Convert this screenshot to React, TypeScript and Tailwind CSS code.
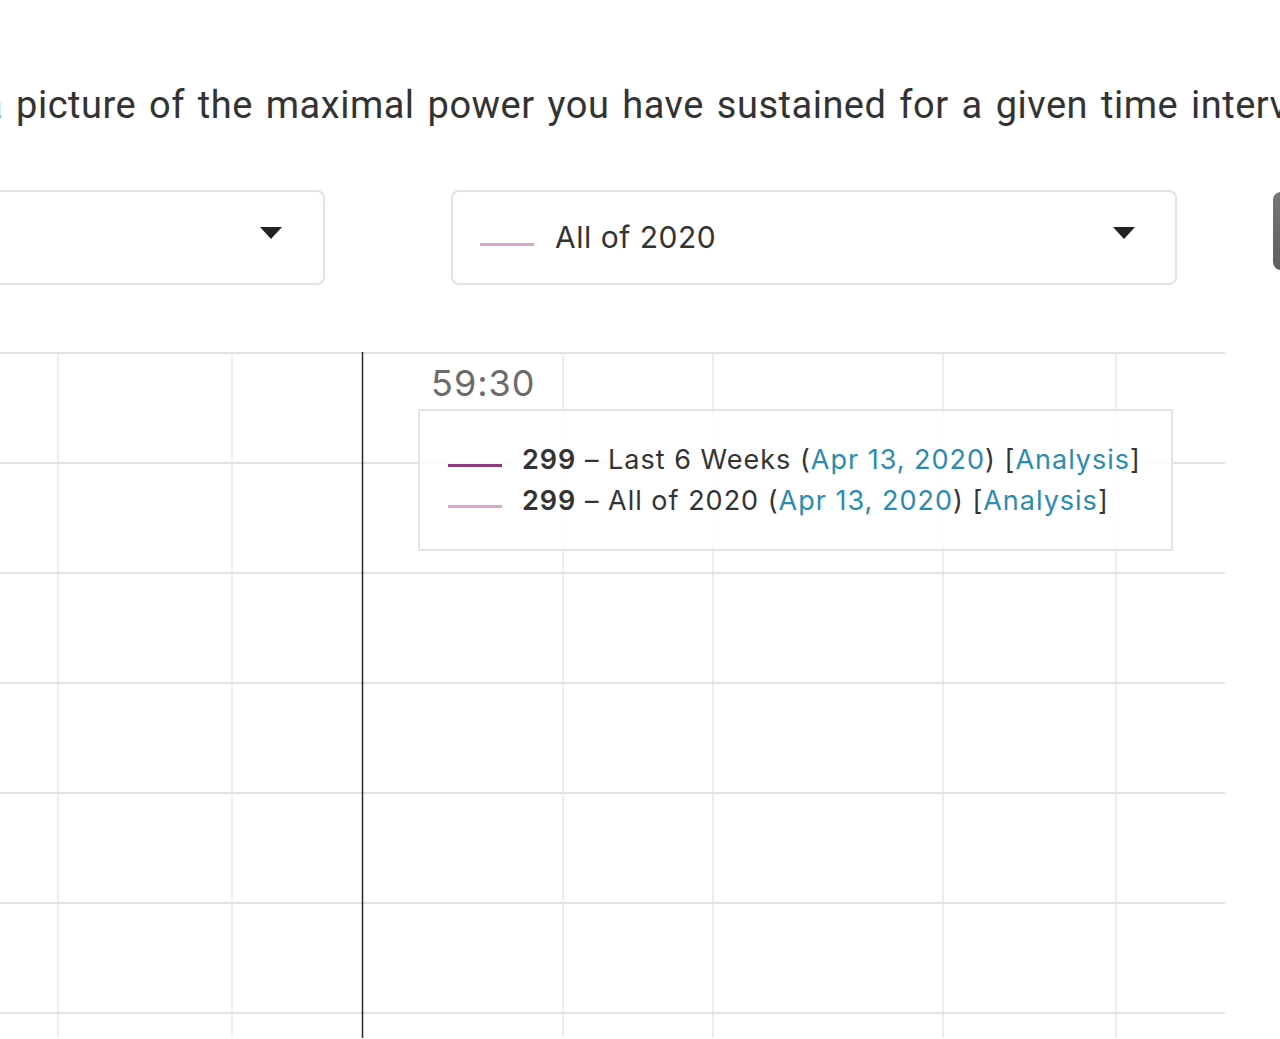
const hLines = [1, 111, 221, 331, 441, 551, 661];
const vLines = [58, 232, 563, 713, 943, 1116];

const Caret = () => (
  <svg width="22" height="12" viewBox="0 0 22 12" className="mb-[10px]">
    <path d="M0 0 L22 0 L11 12 Z" fill="#222" />
  </svg>
);

const TooltipRow = ({ color, label }: { color: string; label: string }) => (
  <div className="flex items-center h-[41px] whitespace-nowrap">
    <span className="w-[54px] h-[3px] mr-[20px] mt-[10px] shrink-0" style={{ backgroundColor: color }} />
    <span className="font-semibold">299</span>
    <span>&nbsp;– {label} (</span>
    <span className="text-[#2b8bb0]">Apr 13, 2020</span>
    <span>) [</span>
    <span className="text-[#2b8bb0]">Analysis</span>
    <span>]</span>
  </div>
);

const PowerChart = () => (
  <div className="relative w-[1280px] h-[686px]">
    <svg width="1225" height="686" className="block">
      {vLines.map((x) => (
        <line key={x} x1={x} y1={0} x2={x} y2={686} stroke="#eeeeee" strokeWidth="2" />
      ))}
      {hLines.map((y) => (
        <line key={y} x1={0} y1={y} x2={1225} y2={y} stroke="#e2e2e2" strokeWidth="2" />
      ))}
      <line x1={362.5} y1={0} x2={362.5} y2={686} stroke="#2a2a2a" strokeWidth="1.5" />
    </svg>

    <div className="absolute left-[431px] top-[13px] text-[36px] leading-none tracking-[1px] text-[#6b6b6b] font-['Inter',sans-serif]">
      59:30
    </div>

    <div className="absolute left-[418px] top-[57px] w-[755px] h-[142px] border-2 border-[#e4e4e4] bg-white/90 pl-[28px] pt-[29px] font-['Inter',sans-serif] text-[27px] tracking-[1px] text-[#333]">
      <TooltipRow color="#8d3a82" label="Last 6 Weeks" />
      <TooltipRow color="#d6a8d0" label="All of 2020" />
    </div>
  </div>
);

export default function App() {
  return (
    <div className="w-[1280px] h-[1039px] overflow-hidden bg-white flex flex-col">
      <p className="mt-[82px] -ml-[18px] whitespace-nowrap text-[38px] leading-[46px] tracking-[0.5px] [word-spacing:3px] text-[#333] font-['Roboto',sans-serif]">
        a picture of the maximal power you have sustained for a given time interval.
      </p>

      <div className="mt-[62px] flex items-start h-[95px]">
        <div className="-ml-[75px] w-[400px] h-[95px] shrink-0 rounded-lg border-2 border-[#e2e2e4] bg-white flex items-center justify-end pr-[41px]">
          <Caret />
        </div>
        <div className="ml-[126px] w-[726px] h-[95px] shrink-0 rounded-lg border-2 border-[#e2e2e4] bg-white flex items-center pl-[27px] pr-[40px]">
          <span className="w-[54px] h-[3px] bg-[#d6a8d0] mt-[14px] shrink-0" />
          <span className="ml-[21px] text-[30px] tracking-[0.5px] text-[#333] font-['Inter',sans-serif]">All of 2020</span>
          <span className="ml-auto flex">
            <Caret />
          </span>
        </div>
        <div className="ml-[96px] mt-[2px] w-[60px] h-[78px] rounded-lg bg-gradient-to-b from-[#777] to-[#5e5e5e] shrink-0" />
      </div>

      <div className="mt-[67px]">
        <PowerChart />
      </div>
    </div>
  );
}
